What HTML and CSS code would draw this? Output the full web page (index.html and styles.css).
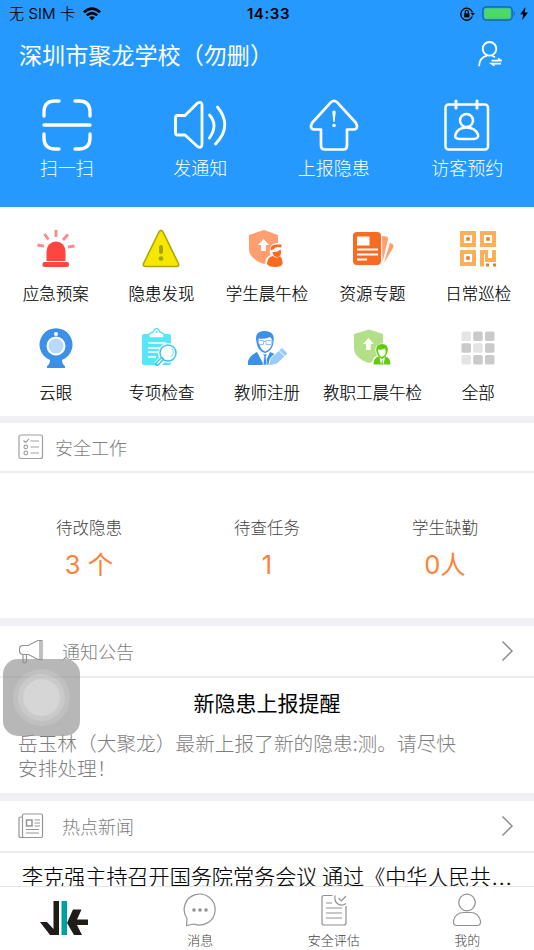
FILE: index.html
```html
<!DOCTYPE html>
<html lang="zh-CN">
<head>
<meta charset="utf-8">
<meta name="viewport" content="width=device-width, initial-scale=1">
<title>校园安全</title>
<link rel="stylesheet" href="styles.css">
</head>
<body>
<div class="app">
  <header class="hero">
    <div class="status">
      <div class="status-left"><span>无 SIM 卡</span>
        <svg width="18" height="14" viewBox="0 0 18 14" fill="none" stroke="#000" stroke-width="2.6"><path d="M1 5.3Q9-1.9 17 5.3"/><path d="M3.8 8.4Q9 3.8 14.2 8.4"/><path d="M9 13.2 6.1 10.4Q9 8 11.9 10.4Z" fill="#000" stroke="none"/></svg>
      </div>
      <b class="clock">14:33</b>
      <div class="status-right">
        <svg width="15" height="14" viewBox="0 0 15 14" fill="none" stroke="#000"><path d="M12.3 9.5A6 6 0 1 1 12.5 5.5" stroke-width="1.3"/><path d="M10.8 6h4l-2 2.7Z" fill="#000" stroke="none"/><path d="M4.2 6.3h5.2v4H4.2Z" fill="#000" stroke="none"/><path d="M5.2 6.5V5a1.6 1.6 0 0 1 3.2 0v1.5" stroke-width="1.1"/></svg>
        <svg width="34" height="15" viewBox="0 0 34 15"><rect x=".8" y=".8" width="29.4" height="13.4" rx="3.6" fill="none" stroke="#185f9f" stroke-width="1.2"/><rect x="2.2" y="2.2" width="26.6" height="10.6" rx="2" fill="#4cd964"/><path d="M31.8 5q2.2 2.5 0 5Z" fill="#185f9f"/></svg>
        <svg width="8" height="13" viewBox="0 0 8 13"><path d="M5.5 0 .2 7.3h3L2.3 13 8 5.4H4.7Z"/></svg>
      </div>
    </div>
    <div class="title-row">
      <h1>深圳市聚龙学校（勿删）</h1>
      <svg width="24" height="26" viewBox="0 0 24 26" fill="none" stroke="#fff" stroke-width="1.8"><circle cx="11.5" cy="7.8" r="6.8"/><path d="M1.1 25.2C1.3 19 5 15.6 9 14.6M14 14.5 17 16.2"/><path d="M13.5 19.6H23L20 17.4M23 22.6H13.500l3 2.200" stroke-width="1.700"/></svg>
    </div>
    <nav class="actions">
      <a class="action"><svg width="52" height="54" viewBox="0 0 52 54" fill="none" stroke="#fff" stroke-width="3.3" stroke-linecap="round" stroke-linejoin="round"><path d="M3 18V14Q3 3 14 3h4M34 3h4Q49 3 49 14v4M3 36v4Q3 51 14 51h4M34 51h4Q49 51 49 40v-4M3 27h46"/></svg><span>扫一扫</span></a>
      <a class="action"><svg width="54" height="54" viewBox="0 0 54 54" fill="none" stroke="#fff" stroke-width="2.8" stroke-linecap="round" stroke-linejoin="round"><path d="M4.500 17.500H12L24.500 5Q29 3 29 7V46Q29 51 24.500 48.500L12 37H4.500Q2.500 37 2.500 35V20Q2.500 17.500 4.500 17.500ZM36.500 17Q45.500 27 36.500 40M44.500 9Q60 28 42.500 46"/></svg><span>发通知</span></a>
      <a class="action"><svg width="50" height="54" viewBox="0 0 50 54" fill="none" stroke="#fff" stroke-width="2.700" stroke-linejoin="round"><path d="M22 4.200Q25 1.500 28 4.200L47 25Q50 31.500 44 31.500H38V47.500Q38 51.500 34.500 51.500H16Q12 51.500 12 47.500V31.500H6Q0 31.500 3 25Z"/><path d="M23.300 13.500Q25 11.500 26.700 13.500L25.600 24h-1.200Z" fill="#fff" stroke="none"/><circle cx="25" cy="27.500" r="1.800" fill="#fff" stroke="none"/></svg><span>上报隐患</span></a>
      <a class="action"><svg width="46" height="54" viewBox="0 0 46 54" fill="none" stroke="#fff" stroke-width="2.500" stroke-linecap="round" stroke-linejoin="round"><rect x="1.500" y="6.500" width="42.500" height="45" rx="3"/><path d="M12 3v7M33 3v7" stroke-width="3"/><circle cx="22.500" cy="22.500" r="6.500"/><path d="M16 41Q10 41 11.500 36.500 14 29.500 22.500 29.500T34 36.500Q35 41 29 41Z"/></svg><span>访客预约</span></a>
    </nav>
  </header>

  <main>
    <section class="shortcuts">
      <a class="shortcut"><svg width="40" height="40" viewBox="0 0 40 40"><path d="M10.500 31V21a9.500 9.500 0 0 1 19 0v10Z" fill="#ff4540"/><rect x="6.500" y="32" width="26.500" height="5" rx="2" fill="#ff4540"/><path d="M1.500 15 8 16.200M8.500 4 12.500 9.500M20 0v7M32 4.500l-5 5.500M38.500 16l-6.500 1" stroke="#ff898a" stroke-width="2.800"/></svg><span>应急预案</span></a>
      <a class="shortcut"><svg width="40" height="40" viewBox="0 0 40 40"><path d="M18 2q2-3.200 4 0L37.200 33q1.800 3.500-2 3.500H4.800q-3.500 0-2-3.500Z" fill="#f5e800" stroke="#b2a60d" stroke-width="1.600"/><path d="M20 17v5" stroke="#aaa00c" stroke-width="4" stroke-linecap="round"/><circle cx="20" cy="28.500" r="2.300" fill="#aaa00c"/></svg><span>隐患发现</span></a>
      <a class="shortcut"><svg width="40" height="40" viewBox="0 0 40 40"><path d="M2 5 17 0 31 5v14q0 10-14 15Q2 29 2 19Z" fill="#ff9f70"/><path d="M16.500 9 22 15h-3.200v6h-4.700v-6H11Z" fill="#fff"/><path d="M18.500 37q-1.500-10 5-12-3-11 6-12h6v12q2 5 1 12Z" fill="#fff"/><path d="M23.500 20.500q-.5-6 5.500-6h5.500v3q-5-1.500-8.500 2Z" fill="#f76b22"/><path d="M25.500 22q5 .5 8-2.500 2 7-3.500 7.500-4 0-4.500-5Z" fill="#f76b22"/><path d="M20 34q.5-7.500 6-8 3.500 3 7 0 3 3.500 2.500 8-1 3-7.500 3T20 34Z" fill="#f76b22"/></svg><span>学生晨午检</span></a>
      <a class="shortcut"><svg width="42" height="40" viewBox="0 0 42 40"><rect x="1" y="2" width="28" height="33" rx="4" fill="#f76b22"/><path d="M5 6.500h12.500v9H5ZM5 18.500h21v2H5ZM5 23.500h21v2H5ZM5 28.500h10v2H5Z" fill="#fff"/><path d="m30 6 4.500.5q2 .7 1.500 3L30.500 32ZM38 12.500l3 2q1 1 .3 3L32 33Z" fill="#ff9f70"/></svg><span>资源专题</span></a>
      <a class="shortcut"><svg width="40" height="40" viewBox="0 0 40 40"><path d="M4 3h12v12H4ZM24 3h12v12H24ZM4 22h12v12H4Z" fill="none" stroke="#ffaf58" stroke-width="4"/><path d="M22 36.500V20h8v8h4v-8h4v12H27v-8h-1v12.500Z" fill="#ffaf58"/><path d="M8.200 7.200h3.600v3.600H8.200ZM28.200 7.200h3.600v3.600h-3.600ZM8.200 26.200h3.600v3.600H8.200ZM28 33.500h3v3h-3ZM35 33.500h3v3h-3Z" fill="#d98435"/></svg><span>日常巡检</span></a>
      <a class="shortcut"><svg width="40" height="44" viewBox="0 0 40 44"><path d="M14 33A16.500 16.500 0 1 1 26 33q0 4 3 6v2H11v-2q3-2 3-6Z" fill="#3c91e7"/><circle cx="20" cy="19" r="8.500" fill="#b9d9ff" stroke="#fff" stroke-width="2"/><circle cx="20" cy="7" r="2" fill="#fff"/></svg><span>云眼</span></a>
      <a class="shortcut"><svg width="40" height="44" viewBox="0 0 40 44"><rect x="1" y="7" width="29" height="31" rx="2" fill="#59e5f7"/><path d="M8 11V7l4-2q3.500-7 7 0l4 2v4Z" fill="#fff" stroke="#59e5f7" stroke-width="1.400"/><circle cx="15.500" cy="5" r="1" fill="#59e5f7"/><path d="M7 16h18M7 21h12M7 25h10M7 30h8" stroke="#fff" stroke-width="1.500"/><path d="m22 32-6 6" stroke="#fff" stroke-width="7"/><circle cx="27" cy="26" r="10" fill="#fff"/><circle cx="27" cy="26" r="8" fill="#fff" stroke="#36c7e1" stroke-width="1.500"/><path d="m21 32-5 5" stroke="#36c7e1" stroke-width="4" stroke-linecap="round"/><path d="m21 32-5 5" stroke="#fff" stroke-width="1.500"/><path d="M31 22q3 4-1 8M23 37h6" fill="none" stroke="#59e5f7"/></svg><span>专项检查</span></a>
      <a class="shortcut"><svg width="40" height="44" viewBox="0 0 40 44"><path d="M1 38v-4q2-6 9-9l7 13 6-13 9 4-8 9Z" fill="#3c91e7"/><path d="M9.500 15Q7 4.500 17 4q11.500 0 9.500 11-1 9-8.500 11-7.500-2-8.500-11Z" fill="#3c91e7"/><path d="M11.500 11.500q8 1 11.500-1.500 3 2 2 7-2 6-7 7.500-6-2-6.500-13Z" fill="#fff"/><path d="M11 13.500h5.500v4H12ZM19 13.500h6l-.5 4H19ZM16.500 14.500H19" fill="none" stroke="#8fc3fa"/><path d="m15.500 27 1.500 2-1 9h4l-1-9 1.500-2Z" fill="#3c91e7" stroke="#fff" stroke-width=".7"/><path d="m21.500 39 2-8L35 20.500l6 6L30 37Z" fill="#9acbff" stroke="#fff"/><path d="m32 23.500 5.500 5.500" stroke="#fff"/></svg><span>教师注册</span></a>
      <a class="shortcut"><svg width="40" height="44" viewBox="0 0 40 44"><path d="M1 7 16 2.500 30 7v14q0 10-14 15Q1 31 1 21Z" fill="#b3df88"/><path d="m15.500 11 5.500 6h-3.200v6h-4.700v-6H10Z" fill="#fff"/><path d="M19 38q0-8 5-9-4-9 2-12 7-2 8 5l-1 7q5 2 5 9Z" fill="#fff"/><path d="M20.500 37.500q0-7 5-8h7q5 1 5 8Z" fill="#5fcd09"/><path d="M23.500 25q-1.500-8 5.500-8t5.500 8q-1 5-5.500 6-4.500-1-5.500-6Z" fill="#5fcd09"/><path d="M25 22.500q5 .5 7-1 2.500 6-3 8.500-4-1.500-4-7.500Z" fill="#fff"/><path d="m26.500 30 1.500 7.500h2.500L32 30l-3 2Z" fill="#fff"/><path d="m29.200 32-1 5.500h2Z" fill="#5fcd09"/></svg><span>教职工晨午检</span></a>
      <a class="shortcut"><svg width="40" height="44" viewBox="0 0 40 44" fill="#cacaca"><rect x="3.500" y="4.500" width="9.500" height="9.500" rx="1.500" fill="#e4e4e4"/><rect x="15.200" y="4.500" width="9.500" height="9.500" rx="1.500"/><rect x="27" y="4.500" width="9.500" height="9.500" rx="1.500"/><rect x="3.500" y="16.200" width="9.500" height="9.500" rx="1.500"/><rect x="15.200" y="16.200" width="9.500" height="9.500" rx="1.500" fill="#e4e4e4"/><rect x="27" y="16.200" width="9.500" height="9.500" rx="1.500"/><rect x="3.500" y="28" width="9.500" height="9.500" rx="1.500" fill="#e4e4e4"/><rect x="15.200" y="28" width="9.500" height="9.500" rx="1.500"/><rect x="27" y="28" width="9.500" height="9.500" rx="1.500"/></svg><span>全部</span></a>
    </section>

    <section class="panel work">
      <div class="panel-head work-head"><svg width="26" height="26" viewBox="0 0 26 26" fill="none" stroke="#a0a0a0" stroke-width="1.200"><rect x="1" y="1" width="23.500" height="23.500" rx="2"/><circle cx="7.800" cy="13" r="1.800"/><circle cx="7.800" cy="19" r="1.800"/><path d="m5.500 6.500 2 2L11 5M12.500 7H21M12.500 13H21M12.500 19H21"/></svg><h2>安全工作</h2></div>
      <div class="stats">
        <div class="stat"><span>待改隐患</span><strong>3 个</strong></div>
        <div class="stat"><span>待查任务</span><strong>1</strong></div>
        <div class="stat"><span>学生缺勤</span><strong>0人</strong></div>
      </div>
    </section>

    <section class="panel notice">
      <div class="panel-head"><svg width="26" height="26" viewBox="0 0 26 26" fill="none" stroke="#959595" stroke-width="1.200"><path d="M10 7.500H4Q1.500 8 1.500 11v2q0 3 3 3.500h6L20 21.500h4V2.500H20L10 7.500ZM22 3v18M5 17v7q2 2 3.500 0v-7"/></svg><h2>通知公告</h2><svg class="chevron" width="13" height="22" viewBox="0 0 13 22"><path d="m1.500 1.500 9.500 9.500-9.500 9.500"/></svg></div>
      <div class="notice-body"><h3>新隐患上报提醒</h3><p>岳玉林（大聚龙）最新上报了新的隐患:测。请尽快<br>安排处理！</p></div>
    </section>

    <section class="panel news">
      <div class="panel-head"><svg width="26" height="26" viewBox="0 0 26 26" fill="none" stroke="#959595" stroke-width="1.200"><rect x="4.500" y="1" width="20" height="23.500" rx="1.500"/><path d="M4.500 4H3Q1 4 1 6v16.500q0 2 2 2h3M16.500 7H22M16.500 10H22M16.500 13H22M8 16.500H21M8 20H21"/><rect x="8.500" y="7" width="5.500" height="6" stroke-width="1.500"/></svg><h2>热点新闻</h2><svg class="chevron" width="13" height="22" viewBox="0 0 13 22"><path d="m1.500 1.500 9.500 9.500-9.500 9.500"/></svg></div>
      <div class="headline">李克强主持召开国务院常务会议 通过《中华人民共<span class="dots">...</span></div>
    </section>
  </main>

  <nav class="tabs">
    <a class="tab home"><svg width="50" height="36" viewBox="0 0 50 36"><path d="M14.500 1H20v34h-9L1 22h7l6.500 7ZM34 9.500h8.500L38 19.500h11V25H38l5 10h-8l-7-12Z" fill="#211c1a"/><path d="M22.500 1H28v34h-5.500Z" fill="#009fa2"/></svg></a>
    <a class="tab"><svg width="34" height="34" viewBox="0 0 34 34" fill="none" stroke="#929292" stroke-width="1.200"><path d="M4 25.500A15.500 15.500 0 1 1 11 31L3.500 32.500Z"/><g fill="#929292" stroke="none"><circle cx="11" cy="17" r="1.800"/><circle cx="17" cy="17" r="1.800"/><circle cx="23" cy="17" r="1.800"/></g></svg><span>消息</span></a>
    <a class="tab"><svg width="34" height="34" viewBox="0 0 34 34" fill="none" stroke="#929292" stroke-width="1.200"><path d="M15.500 2.500H7q-2 0-2 2V30q0 2 2 2h20q2 0 2-2V13M9 10h6M9 15h16M9 20h16M9 25h16M18 2.500q-1 6 3 8.500t8-.5M21.500 5l3 3L29 3"/></svg><span>安全评估</span></a>
    <a class="tab"><svg width="34" height="34" viewBox="0 0 34 34" fill="none" stroke="#929292" stroke-width="1.200"><circle cx="17" cy="9.500" r="8.300"/><path d="M7 32.500q-4 0-3.500-4.500 2-8.500 10-8.500h7q8 0 10 8.500.5 4.500-3.500 4.500Z"/></svg><span>我的</span></a>
  </nav>
  <div class="assistive"><i></i></div>
</div>
</body>
</html>
```
FILE: styles.css
```css
* { box-sizing: border-box; }
body { margin: 0; background: #fff; font-family: "Noto Sans CJK SC", sans-serif; font-weight: 300; color: #000; }
h1, h2, h3, p { margin: 0; font-weight: inherit; }
svg { display: block; flex: none; }
.app { position: relative; width: 534px; height: 950px; overflow: hidden; display: flex; flex-direction: column; }
main { flex: 1; min-height: 0; overflow: hidden; background: #efeff4; display: flex; flex-direction: column; }
.hero { height: 207px; flex: none; background: #2699ff; color: #fff; }
.status { height: 28px; display: grid; grid-template-columns: 1fr auto 1fr; align-items: center; padding: 0 6px 0 9px; color: #000; font: 400 15px/28px Inter, "Noto Sans CJK SC", sans-serif; }
.status-left, .status-right { display: flex; align-items: center; }
.status-left { gap: 8px; }
.status-left span { font-weight: 300; letter-spacing: .1px; -webkit-text-stroke: .2px #000; }
.status-right { justify-content: flex-end; gap: 7px; margin-top: -1px; }
.status-right svg:last-child { margin-left: -3px; }
.clock { font-weight: 600; letter-spacing: .6px; }
.title-row { height: 52px; display: flex; justify-content: space-between; align-items: center; padding: 0 32px 0 19px; }
.title-row h1 { font-size: 23.100px; line-height: 52px; font-weight: 400; }
.actions { display: grid; grid-template-columns: repeat(4, 1fr); padding-top: 18px; }
.action { display: flex; flex-direction: column; align-items: center; font-size: 18px; line-height: 26px; gap: 2px; }
.shortcuts { height: 209px; flex: none; background: #fff; display: grid; grid-template-columns: repeat(5, 1fr); grid-template-rows: 99px 89px; padding: 21px 3px 0; }
.shortcut { display: flex; flex-direction: column; align-items: center; font-size: 16.500px; line-height: 24px; white-space: nowrap; -webkit-text-stroke: .15px #000; }
.shortcut svg { height: 44px; }
.shortcut span { margin-top: 9px; }
.panel { background: #fff; flex: none; }
.panel-head { height: 52px; display: flex; align-items: center; padding: 0 20px 0 18px; border-bottom: 2px solid #ececee; color: #7e7e7e; }
.panel-head h2 { flex: 1; margin-left: 18px; font-size: 18px; line-height: 26px; }
.chevron { fill: none; stroke: #8c8c8c; stroke-width: 1.500; }
.work { height: 195px; margin-top: 7px; }
.work-head { height: 50px; }
.work-head h2 { margin-left: 11px; }
.stats { display: grid; grid-template-columns: repeat(3, 1fr); padding-top: 41px; }
.stat { display: flex; flex-direction: column; align-items: center; color: #444; font-size: 16.500px; line-height: 26px; }
.stat strong { color: #ff8138; font: 400 25.500px/36px Inter, "Noto Sans CJK SC", sans-serif; margin-top: 7px; }
.notice { height: 167px; margin-top: 8px; }
.notice-body { padding: 8px 19px; }
.notice-body h3 { font-size: 21px; line-height: 32px; text-align: center; font-weight: 400; color: #000; }
.notice-body p { margin: 12px 0 0 -1px; color: #7e7e7e; font-size: 19.700px; line-height: 25px; white-space: nowrap; }
.news { height: 160px; margin-top: 8px; }
.headline { padding: 6px 0 6px 22px; font-size: 21.100px; line-height: 34px; white-space: nowrap; color: #000; -webkit-text-stroke: .15px #000; }
.dots { font-family: Inter, sans-serif; font-weight: 300; letter-spacing: 1px; margin-left: 1px; }
.tabs { height: 64px; flex: none; display: grid; grid-template-columns: repeat(4, 1fr); border-top: 1px solid #e8e8e8; background: #fff; color: #404040; }
.tab { display: flex; flex-direction: column; align-items: center; padding-top: 6px; font-size: 13px; line-height: 19px; }
.tab span { margin-top: 3px; }
.home svg { margin: 7px 0 0 -5px; }
.assistive { position: absolute; left: 3px; top: 659px; width: 77px; height: 77px; border-radius: 15px; background: rgba(145,145,145,.65); display: grid; place-items: center; }
.assistive i { width: 37px; height: 37px; border-radius: 50%; background: #d6d6d6; box-shadow: 0 0 0 5px rgba(255,255,255,.16), 0 0 0 10px rgba(255,255,255,.13); }
```
